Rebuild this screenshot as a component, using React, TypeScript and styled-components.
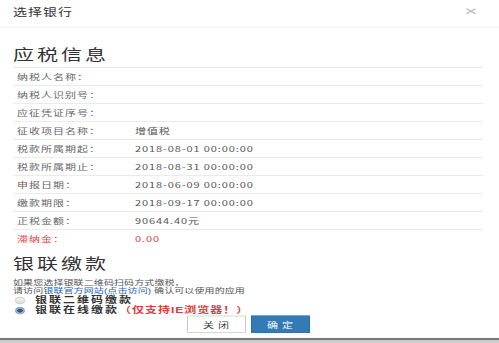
import React, { useState } from "react";
import styled, { createGlobalStyle } from "styled-components";

// the reference screenshot is squeezed vertically, so the page is laid out
// at full height and the stage is scaled down on Y
const SQUEEZE = 343 / 476;

const GlobalStyle = createGlobalStyle`
  html, body {
    margin: 0;
    padding: 0;
    overflow: hidden;
    background: #cfcfcf;
  }
  * {
    box-sizing: border-box;
  }
`;

const Viewport = styled.div`
  width: 499px;
  height: 343px;
  overflow: hidden;
`;

const Stage = styled.div`
  width: 499px;
  height: 476px;
  transform: scaleY(${SQUEEZE});
  transform-origin: top left;
  font-family: "Noto Sans CJK SC", "Noto Sans", sans-serif;
`;

const Modal = styled.div`
  height: 472px;
  background: #fff;
  border-bottom: 3px solid #7a7a7a;
  display: flex;
  flex-direction: column;
`;

const Header = styled.div`
  height: 38px;
  flex: none;
  display: flex;
  align-items: center;
  justify-content: space-between;
  padding: 0 22px 6px 13px;
  border-bottom: 1px solid #ececec;
`;

const Title = styled.div`
  font-size: 14px;
  letter-spacing: 1px;
  color: #333;
`;

const Close = styled.button`
  border: none;
  background: none;
  padding: 0;
  display: flex;
  cursor: pointer;
`;

const Body = styled.div`
  padding: 22px 16px 0 13px;
  display: flex;
  flex-direction: column;
`;

const SectionTitle = styled.h2<{ $gap?: number }>`
  margin: ${(p) => p.$gap ?? 0}px 0 0;
  font-size: 21px;
  font-weight: 400;
  letter-spacing: 3px;
  line-height: 28px;
  color: #333;
`;

const InfoTable = styled.div`
  margin-top: 5px;
  display: flex;
  flex-direction: column;
`;

const Row = styled.div<{ $warn?: boolean }>`
  display: grid;
  grid-template-columns: 122px 1fr;
  align-items: center;
  height: 25px;
  border-top: 1px solid #e3e3e3;
  font-size: 11px;
  color: ${(p) => (p.$warn ? "#e4393c" : "#666")};
`;

const Label = styled.span`
  padding-left: 4px;
  letter-spacing: 1px;
`;

const Value = styled.span<{ $warn?: boolean }>`
  letter-spacing: 0.9px;
  color: ${(p) => (p.$warn ? "#e4393c" : "#555")};
`;

// Liberation Sans first keeps the line boxes short; the CJK glyphs fall back to Noto
const Note = styled.div`
  margin-top: 8px;
  font-family: "Liberation Sans", "Noto Sans CJK SC", sans-serif;
  font-size: 10px;
  line-height: 11.5px;
  letter-spacing: 0.1px;
  color: #555;
`;

const Link = styled.a`
  color: #2a64c2;
  text-decoration: none;
`;

const Options = styled.div`
  margin-top: 1px;
  display: flex;
  flex-direction: column;
`;

const Option = styled.label`
  display: flex;
  align-items: center;
  gap: 10px;
  height: 14px;
  padding-left: 2px;
  font-family: "Liberation Sans", "Noto Sans CJK SC", sans-serif;
  font-size: 12px;
  line-height: 14px;
  font-weight: 700;
  letter-spacing: 2px;
  color: #333;
  cursor: pointer;
`;

const Dot = styled.span<{ $on: boolean }>`
  width: 10px;
  height: 10px;
  border-radius: 50%;
  flex: none;
  border: 1px solid ${(p) => (p.$on ? "#7f93ad" : "#c4c4c4")};
  background: ${(p) =>
    p.$on
      ? "radial-gradient(circle, #2d5b94 0 2.5px, #9fb1c8 3px)"
      : "linear-gradient(#f4f4f4, #dcdcdc)"};
`;

const Warn = styled.span`
  color: #e4393c;
  letter-spacing: 1px;
`;

const Footer = styled.div`
  display: flex;
  justify-content: center;
  gap: 5px;
`;

const Button = styled.button<{ $primary?: boolean }>`
  width: 59px;
  height: 24px;
  font-family: inherit;
  font-size: 11px;
  letter-spacing: 4px;
  padding: 0 0 0 4px;
  cursor: pointer;
  border: 1px solid ${(p) => (p.$primary ? "#2e6da4" : "#c8c8c8")};
  background: ${(p) => (p.$primary ? "#337ab7" : "#fff")};
  color: ${(p) => (p.$primary ? "#fff" : "#444")};
`;

const rows: { label: string; value: string; warn?: boolean }[] = [
  { label: "纳税人名称：", value: "" },
  { label: "纳税人识别号：", value: "" },
  { label: "应征凭证序号：", value: "" },
  { label: "征收项目名称：", value: "增值税" },
  { label: "税款所属期起：", value: "2018-08-01 00:00:00" },
  { label: "税款所属期止：", value: "2018-08-31 00:00:00" },
  { label: "申报日期：", value: "2018-06-09 00:00:00" },
  { label: "缴款期限：", value: "2018-09-17 00:00:00" },
  { label: "正税金额：", value: "90644.40元" },
  { label: "滞纳金：", value: "0.00", warn: true },
];

export default function App() {
  const [pay, setPay] = useState("online");

  return (
    <Viewport>
      <GlobalStyle />
      <Stage>
        <Modal>
          <Header>
            <Title>选择银行</Title>
            <Close aria-label="关闭">
              <svg width="12" height="9" viewBox="0 0 12 9">
                <path d="M1.5 1 L10.5 8 M10.5 1 L1.5 8" stroke="#b8b8b8" strokeWidth="1.6" />
              </svg>
            </Close>
          </Header>
          <Body>
            <SectionTitle>应税信息</SectionTitle>
            <InfoTable>
              {rows.map((r) => (
                <Row key={r.label} $warn={r.warn}>
                  <Label>{r.label}</Label>
                  <Value $warn={r.warn}>{r.value}</Value>
                </Row>
              ))}
            </InfoTable>

            <SectionTitle $gap={7}>银联缴款</SectionTitle>
            <Note>
              如果您选择银联二维码扫码方式缴税，
              <br />
              请访问<Link href="#">银联官方网站(点击访问)</Link> 确认可以使用的应用
            </Note>
            <Options>
              <Option onClick={() => setPay("qr")}>
                <Dot $on={pay === "qr"} />
                银联二维码缴款
              </Option>
              <Option onClick={() => setPay("online")}>
                <Dot $on={pay === "online"} />
                <span>
                  银联在线缴款<Warn>（仅支持IE浏览器！）</Warn>
                </span>
              </Option>
            </Options>
            <Footer>
              <Button>关闭</Button>
              <Button $primary>确定</Button>
            </Footer>
          </Body>
        </Modal>
      </Stage>
    </Viewport>
  );
}
